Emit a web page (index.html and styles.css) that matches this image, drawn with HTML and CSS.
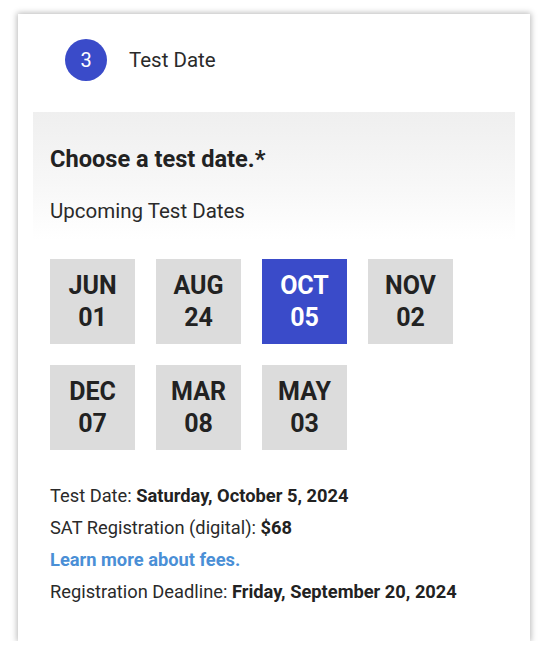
FILE: index.html
```html
<!DOCTYPE html>
<html>
<head>
<meta charset="utf-8">
<link rel="stylesheet" href="styles.css">
</head>
<body>
<div class="card">
  <div class="step">
    <div class="step-num">3</div>
    <div class="step-title">Test Date</div>
  </div>
  <div class="panel">
    <h2 class="heading">Choose a test date.*</h2>
    <div class="sub">Upcoming Test Dates</div>
  </div>
  <div class="dates">
    <div class="tile"><span>JUN</span><span>01</span></div>
    <div class="tile"><span>AUG</span><span>24</span></div>
    <div class="tile selected"><span>OCT</span><span>05</span></div>
    <div class="tile"><span>NOV</span><span>02</span></div>
    <div class="tile"><span>DEC</span><span>07</span></div>
    <div class="tile"><span>MAR</span><span>08</span></div>
    <div class="tile"><span>MAY</span><span>03</span></div>
  </div>
  <div class="info">
    <p>Test Date: <b>Saturday, October 5, 2024</b></p>
    <p>SAT Registration (digital): <b>$68</b></p>
    <p><a class="link" href="#">Learn more about fees.</a></p>
    <p>Registration Deadline: <b>Friday, September 20, 2024</b></p>
  </div>
</div>
</body>
</html>
```
FILE: styles.css
```css
html, body {
  margin: 0;
  padding: 0;
  background: #ffffff;
}
body {
  padding: 14px 0 0 18px;
  font-family: Roboto, "Liberation Sans", sans-serif;
  color: #222;
}
.card {
  width: 512px;
  height: 627px;
  box-sizing: border-box;
  background: #fff;
  box-shadow: 0 0 6px 1px rgba(0,0,0,0.28);
  padding: 25px 15px 0 15px;
}
.step {
  display: flex;
  align-items: center;
  padding-left: 32px;
  height: 42px;
}
.step-num {
  width: 42px;
  height: 42px;
  border-radius: 50%;
  background: #3a4bc9;
  color: #fff;
  font-size: 20px;
  display: flex;
  align-items: center;
  justify-content: center;
}
.step-title {
  margin-left: 22px;
  font-size: 20.5px;
  color: #2a2a2a;
}
.panel {
  margin-top: 31px;
  height: 128px;
  padding: 33px 17px 0 17px;
  box-sizing: border-box;
  background: linear-gradient(to bottom, #efefef 0%, #f7f7f7 55%, #ffffff 100%);
}
.heading {
  margin: 0;
  font-size: 23.6px;
  font-weight: 700;
  line-height: 28px;
  color: #222;
}
.sub {
  margin-top: 26px;
  font-size: 20.5px;
  line-height: 24px;
  color: #2a2a2a;
}
.dates {
  margin-top: 19px;
  padding-left: 17px;
  display: grid;
  grid-template-columns: repeat(4, 85px);
  column-gap: 21px;
  row-gap: 21px;
}
.tile {
  height: 85px;
  background: #dcdcdc;
  display: flex;
  flex-direction: column;
  align-items: center;
  justify-content: center;
  font-size: 25px;
  font-weight: 700;
  line-height: 32px;
  color: #222;
}
.tile.selected {
  background: #3a4bc9;
  color: #fff;
}
.info {
  margin-top: 30px;
  padding-left: 17px;
  font-size: 18.3px;
  color: #2a2a2a;
}
.info p {
  margin: 0;
  line-height: 32px;
}
.info b {
  font-weight: 700;
  color: #222;
}
.link {
  color: #4a8fd6;
  font-weight: 700;
  text-decoration: none;
}
```
